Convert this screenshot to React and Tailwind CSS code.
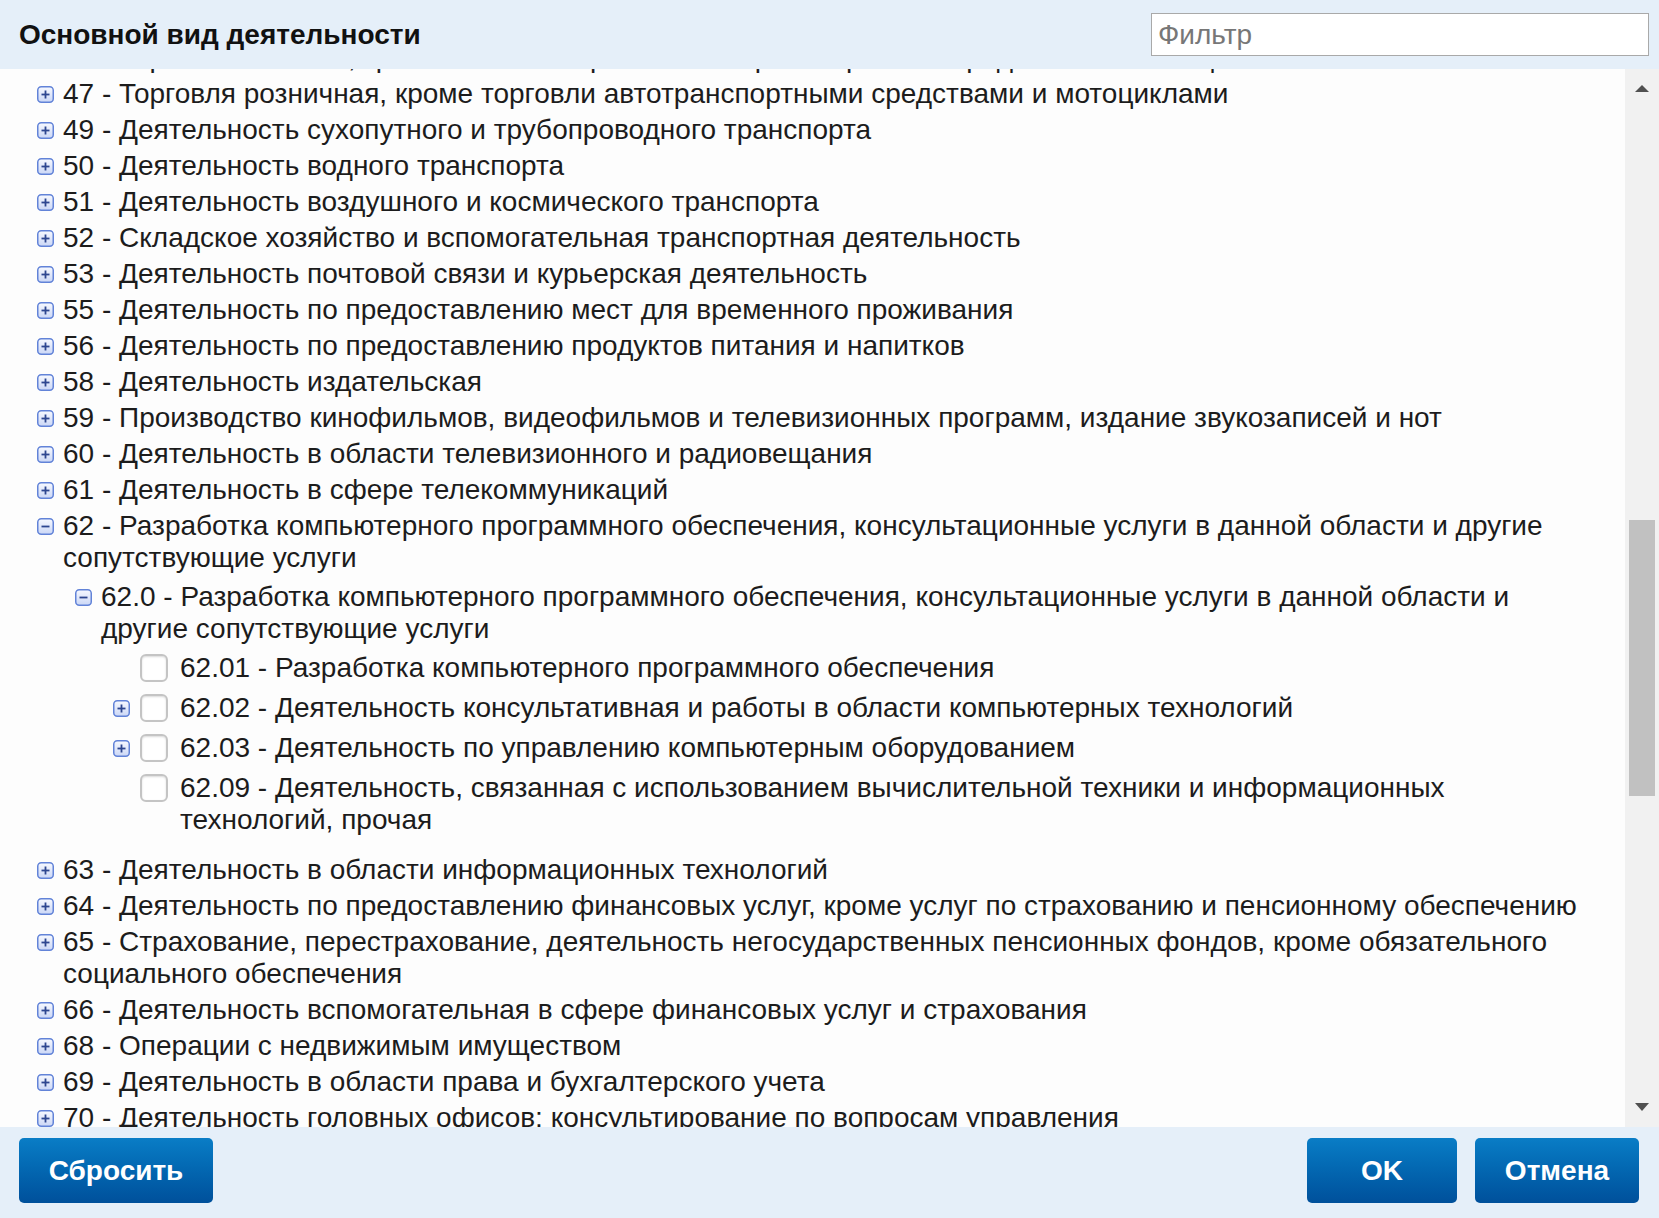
import React from 'react';

const before = [
	['46', 'Торговля оптовая, кроме оптовой торговли автотранспортными средствами и мотоциклами'],
	['47', 'Торговля розничная, кроме торговли автотранспортными средствами и мотоциклами'],
	['49', 'Деятельность сухопутного и трубопроводного транспорта'],
	['50', 'Деятельность водного транспорта'],
	['51', 'Деятельность воздушного и космического транспорта'],
	['52', 'Складское хозяйство и вспомогательная транспортная деятельность'],
	['53', 'Деятельность почтовой связи и курьерская деятельность'],
	['55', 'Деятельность по предоставлению мест для временного проживания'],
	['56', 'Деятельность по предоставлению продуктов питания и напитков'],
	['58', 'Деятельность издательская'],
	['59', 'Производство кинофильмов, видеофильмов и телевизионных программ, издание звукозаписей и нот'],
	['60', 'Деятельность в области телевизионного и радиовещания'],
	['61', 'Деятельность в сфере телекоммуникаций'],
];

const after = [
	['63', 'Деятельность в области информационных технологий'],
	['64', 'Деятельность по предоставлению финансовых услуг, кроме услуг по страхованию и пенсионному обеспечению'],
	['65', 'Страхование, перестрахование, деятельность негосударственных пенсионных фондов, кроме обязательного социального обеспечения'],
	['66', 'Деятельность вспомогательная в сфере финансовых услуг и страхования'],
	['68', 'Операции с недвижимым имуществом'],
	['69', 'Деятельность в области права и бухгалтерского учета'],
	['70', 'Деятельность головных офисов; консультирование по вопросам управления'],
];

// третий уровень, у двух пунктов есть свои дочерние
const leaves = [
	['62.01', 'Разработка компьютерного программного обеспечения', false],
	['62.02', 'Деятельность консультативная и работы в области компьютерных технологий', true],
	['62.03', 'Деятельность по управлению компьютерным оборудованием', true],
	['62.09', 'Деятельность, связанная с использованием вычислительной техники и информационных технологий, прочая', false],
];

const Toggle = ({ open }) => (
	<svg width="17" height="17" viewBox="0 0 17 17">
		<defs>
			<linearGradient id="tg" x1="0" y1="0" x2="0" y2="1">
				<stop offset="0" stopColor="#f7f9ff" />
				<stop offset="1" stopColor="#cbd7f6" />
			</linearGradient>
		</defs>
		<rect x="0.75" y="0.75" width="15.5" height="15.5" rx="3.5" fill="url(#tg)" stroke="#6283d8" strokeWidth="1.5" />
		<path d="M4.5 8.5h8" stroke="#2d4690" strokeWidth="1.8" />
		{!open && <path d="M8.5 4.5v8" stroke="#2d4690" strokeWidth="1.8" />}
	</svg>
);

const Row = ({ code, name, open }) => (
	<div className="flex gap-[8px] py-[2px]">
		<div className="w-[18px] h-[32px] flex items-center shrink-0">
			<Toggle open={open} />
		</div>
		<div className="leading-[32px]">
			{code} - {name}
		</div>
	</div>
);

const App = () => {
	return (
		<div className="w-[1659px] h-[1218px] flex flex-col font-['Liberation_Sans',Arial,sans-serif] text-[#1c1c1c] overflow-hidden">
			<header className="h-[69px] shrink-0 bg-[#e5eff9] flex items-center justify-between pl-[19px] pr-[10px]">
				<h1 className="text-[28px] font-bold text-[#111]">Основной вид деятельности</h1>
				<input
					placeholder="Фильтр"
					className="w-[498px] h-[43px] bg-white border border-[#a9a9a9] px-[6px] text-[28px] placeholder:text-[#777] outline-none"
				/>
			</header>

			<div className="flex-1 min-h-0 flex bg-[#fdfdfd]">
				<div className="flex-1 overflow-hidden pl-[37px] pr-[35px] text-[28px]">
					<ul className="-mt-[29px]">
						{before.map(([code, name]) => (
							<li key={code}>
								<Row code={code} name={name} />
							</li>
						))}
						<li>
							<Row
								code="62"
								name="Разработка компьютерного программного обеспечения, консультационные услуги в данной области и другие сопутствующие услуги"
								open
							/>
							<ul className="ml-[38px] mt-[3px]">
								<li>
									<Row
										code="62.0"
										name="Разработка компьютерного программного обеспечения, консультационные услуги в данной области и другие сопутствующие услуги"
										open
									/>
									<ul className="ml-[38px] mt-[1px] mb-[12px]">
										{leaves.map(([code, name, more]) => (
											<li key={code} className="flex py-[4px]">
												<div className="w-[18px] h-[32px] flex items-center shrink-0">
													{more && <Toggle />}
												</div>
												<div className="h-[32px] flex items-center shrink-0 ml-[9px]">
													<span className="block w-[28px] h-[28px] rounded-[6px] border-2 border-[#c4c4c4] bg-white shadow-[inset_0_1px_2px_rgba(0,0,0,0.15)]" />
												</div>
												<div className="ml-[12px] leading-[32px]">
													{code} - {name}
												</div>
											</li>
										))}
									</ul>
								</li>
							</ul>
						</li>
						{after.map(([code, name]) => (
							<li key={code}>
								<Row code={code} name={name} />
							</li>
						))}
					</ul>
				</div>

				<div className="w-[34px] shrink-0 bg-[#f1f1f1] flex flex-col items-center">
					<span className="mt-[16px] w-0 h-0 border-x-[7px] border-x-transparent border-b-[7px] border-b-[#505050]" />
					<div className="mt-[428px] w-[26px] h-[276px] bg-[#c1c1c1]" />
					<span className="mt-[307px] w-0 h-0 border-x-[7px] border-x-transparent border-t-[8px] border-t-[#505050]" />
				</div>
			</div>

			<footer className="h-[91px] shrink-0 bg-[#e5eff9] flex items-start justify-between pt-[11px] pl-[19px] pr-[20px]">
				<button className="w-[194px] h-[65px] rounded-[5px] bg-linear-to-b from-[#0a7dc6] to-[#00509b] text-white text-[28px] font-bold">
					Сбросить
				</button>
				<div className="flex gap-[18px]">
					<button className="w-[150px] h-[65px] rounded-[5px] bg-linear-to-b from-[#0a7dc6] to-[#00509b] text-white text-[28px] font-bold">
						OK
					</button>
					<button className="w-[164px] h-[65px] rounded-[5px] bg-linear-to-b from-[#0a7dc6] to-[#00509b] text-white text-[28px] font-bold">
						Отмена
					</button>
				</div>
			</footer>
		</div>
	);
};

export default App;
